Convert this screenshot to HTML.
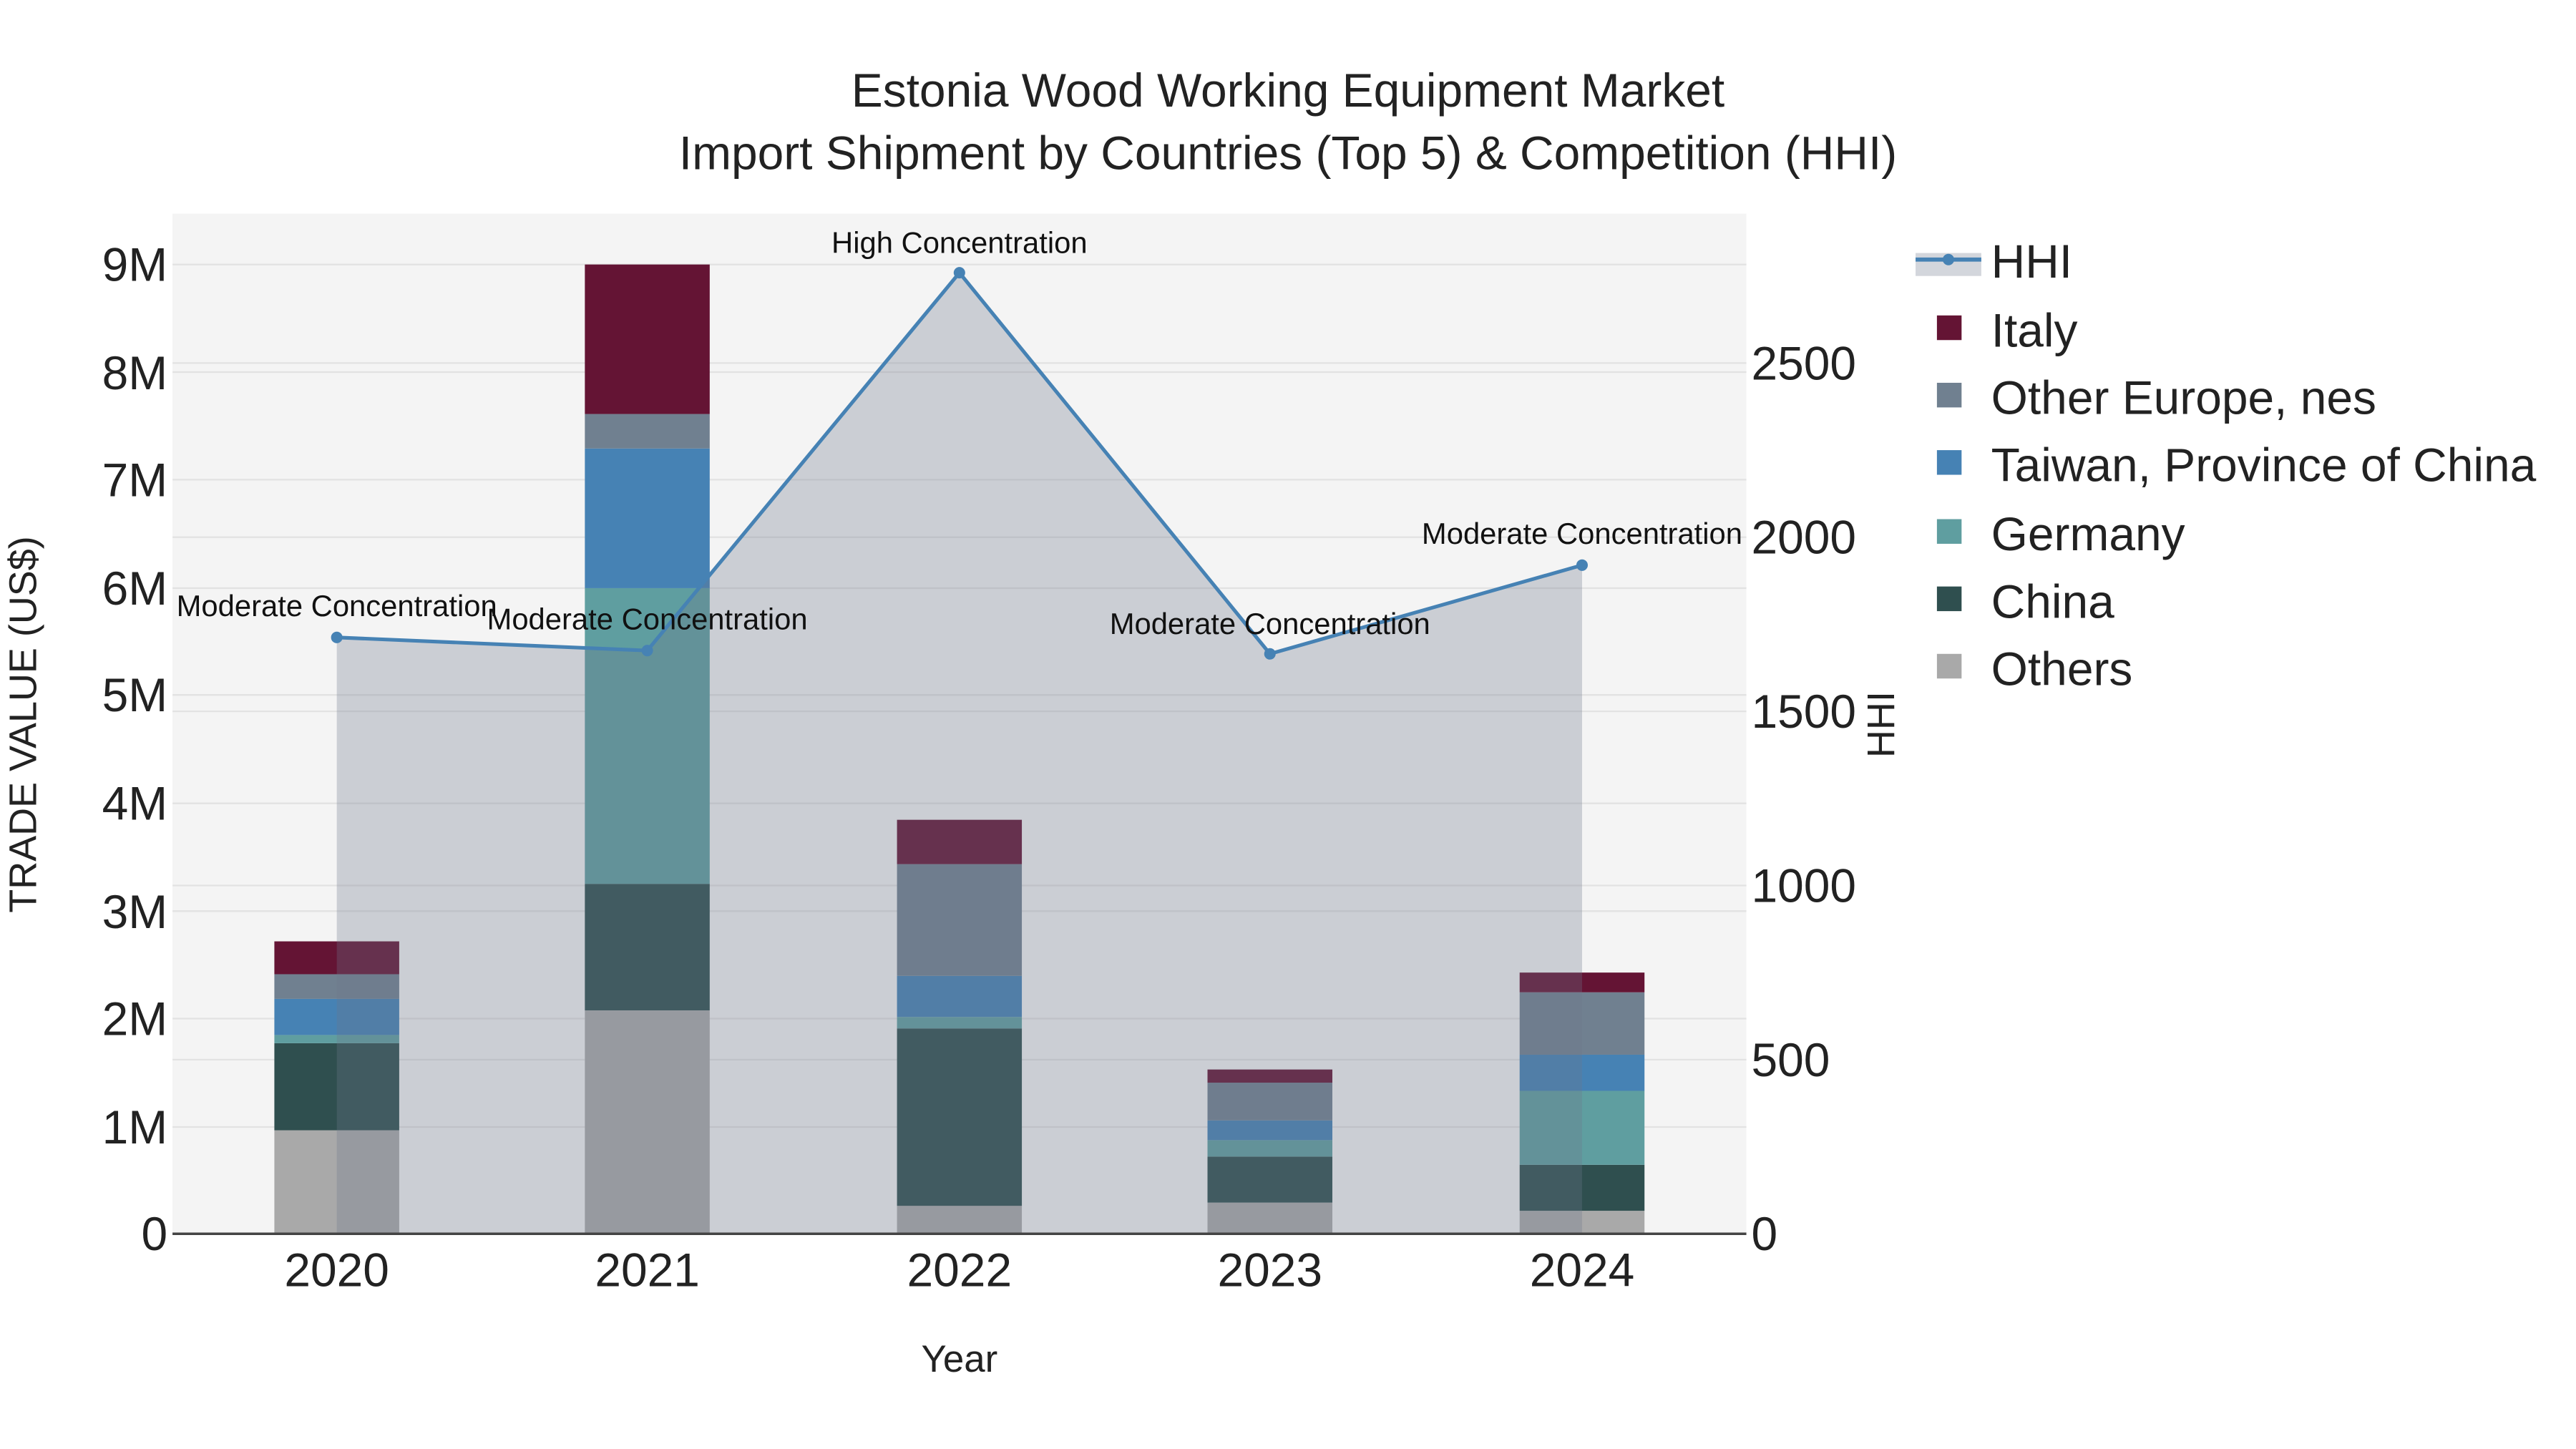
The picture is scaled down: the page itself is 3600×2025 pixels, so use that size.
<!DOCTYPE html>
<html><head><meta charset="utf-8"><style>
html,body{margin:0;padding:0;background:#fff;}
svg{display:block;}
text{font-family:"Liberation Sans",sans-serif;}
</style></head><body>
<svg width="3600" height="2025" viewBox="0 0 1568 882" preserveAspectRatio="none" xmlns="http://www.w3.org/2000/svg">
<rect x="0" y="0" width="1568" height="882" fill="#fff"/>
<rect x="105" y="130" width="958" height="621" fill="#f4f4f4"/>
<g stroke="#e2e2e2" stroke-width="1">
<line x1="105" x2="1063" y1="161" y2="161"/><line x1="105" x2="1063" y1="226.5" y2="226.5"/>
<line x1="105" x2="1063" y1="292" y2="292"/><line x1="105" x2="1063" y1="358" y2="358"/>
<line x1="105" x2="1063" y1="423" y2="423"/><line x1="105" x2="1063" y1="489" y2="489"/>
<line x1="105" x2="1063" y1="554.6" y2="554.6"/><line x1="105" x2="1063" y1="620" y2="620"/>
<line x1="105" x2="1063" y1="686" y2="686"/>
<line x1="105" x2="1063" y1="221" y2="221"/><line x1="105" x2="1063" y1="327" y2="327"/>
<line x1="105" x2="1063" y1="433" y2="433"/><line x1="105" x2="1063" y1="539" y2="539"/>
<line x1="105" x2="1063" y1="645" y2="645"/>
</g>
<g>
<rect x="167" y="688" width="76" height="63" fill="#a9a9a9"/>
<rect x="167" y="635" width="76" height="53" fill="#2f4f4f"/>
<rect x="167" y="630" width="76" height="5" fill="#5f9ea0"/>
<rect x="167" y="608" width="76" height="22" fill="#4682b4"/>
<rect x="167" y="593" width="76" height="15" fill="#708090"/>
<rect x="167" y="573" width="76" height="20" fill="#641434"/>
<rect x="356" y="615" width="76" height="136" fill="#a9a9a9"/>
<rect x="356" y="538" width="76" height="77" fill="#2f4f4f"/>
<rect x="356" y="358" width="76" height="180" fill="#5f9ea0"/>
<rect x="356" y="273" width="76" height="85" fill="#4682b4"/>
<rect x="356" y="252" width="76" height="21" fill="#708090"/>
<rect x="356" y="161" width="76" height="91" fill="#641434"/>
<rect x="546" y="734" width="76" height="17" fill="#a9a9a9"/>
<rect x="546" y="626" width="76" height="108" fill="#2f4f4f"/>
<rect x="546" y="619" width="76" height="7" fill="#5f9ea0"/>
<rect x="546" y="594" width="76" height="25" fill="#4682b4"/>
<rect x="546" y="526" width="76" height="68" fill="#708090"/>
<rect x="546" y="499" width="76" height="27" fill="#641434"/>
<rect x="735" y="732" width="76" height="19" fill="#a9a9a9"/>
<rect x="735" y="704" width="76" height="28" fill="#2f4f4f"/>
<rect x="735" y="694" width="76" height="10" fill="#5f9ea0"/>
<rect x="735" y="682" width="76" height="12" fill="#4682b4"/>
<rect x="735" y="659" width="76" height="23" fill="#708090"/>
<rect x="735" y="651" width="76" height="8" fill="#641434"/>
<rect x="925" y="737" width="76" height="14" fill="#a9a9a9"/>
<rect x="925" y="709" width="76" height="28" fill="#2f4f4f"/>
<rect x="925" y="664" width="76" height="45" fill="#5f9ea0"/>
<rect x="925" y="642" width="76" height="22" fill="#4682b4"/>
<rect x="925" y="604" width="76" height="38" fill="#708090"/>
<rect x="925" y="592" width="76" height="12" fill="#641434"/>
</g>
<path d="M205,751 L205,388 L394,396 L584,166 L773,398 L963,344 L963,751 Z" fill="rgba(110,120,140,0.3)"/>
<polyline points="205,388 394,396 584,166 773,398 963,344" fill="none" stroke="#4682b4" stroke-width="2.2"/>
<g fill="#4682b4"><circle cx="205" cy="388" r="3.5"/><circle cx="394" cy="396" r="3.5"/><circle cx="584" cy="166" r="3.5"/><circle cx="773" cy="398" r="3.5"/><circle cx="963" cy="344" r="3.5"/></g>
<line x1="105" x2="1063" y1="751" y2="751" stroke="#444" stroke-width="1.5"/>
<g font-size="18.2" fill="#111" text-anchor="middle">
<text x="205" y="375">Moderate Concentration</text>
<text x="394" y="383">Moderate Concentration</text>
<text x="584" y="154">High Concentration</text>
<text x="773" y="386">Moderate Concentration</text>
<text x="963" y="331">Moderate Concentration</text>
</g>
<g font-size="28.7" fill="#222" text-anchor="middle">
<text x="784" y="65">Estonia Wood Working Equipment Market</text>
<text x="784" y="103">Import Shipment by Countries (Top 5) &amp; Competition (HHI)</text>
</g>
<g font-size="28.7" fill="#222" text-anchor="end">
<text x="102" y="171">9M</text><text x="102" y="237">8M</text><text x="102" y="302">7M</text>
<text x="102" y="368">6M</text><text x="102" y="433">5M</text><text x="102" y="499">4M</text>
<text x="102" y="565">3M</text><text x="102" y="630">2M</text><text x="102" y="696">1M</text>
<text x="102" y="761">0</text>
</g>
<g font-size="28.7" fill="#222" text-anchor="start">
<text x="1066" y="231">2500</text><text x="1066" y="337">2000</text><text x="1066" y="443">1500</text>
<text x="1066" y="549">1000</text><text x="1066" y="655">500</text><text x="1066" y="761">0</text>
</g>
<g font-size="28.7" fill="#222" text-anchor="middle">
<text x="205" y="783">2020</text><text x="394" y="783">2021</text><text x="584" y="783">2022</text>
<text x="773" y="783">2023</text><text x="963" y="783">2024</text>
</g>
<text x="584" y="835" font-size="23" fill="#222" text-anchor="middle">Year</text>
<text transform="translate(22,441) rotate(-90)" font-size="23.5" fill="#222" text-anchor="middle">TRADE VALUE (US$)</text>
<text transform="translate(1153,441) rotate(-90)" font-size="23.5" fill="#222" text-anchor="middle">HHI</text>
<rect x="1166" y="154" width="40" height="14" fill="rgba(110,120,140,0.3)"/>
<line x1="1166" x2="1206" y1="158" y2="158" stroke="#4682b4" stroke-width="2.5"/>
<circle cx="1186" cy="158" r="3.5" fill="#4682b4"/>
<rect x="1179" y="192" width="15" height="15" fill="#641434"/>
<rect x="1179" y="233" width="15" height="15" fill="#708090"/>
<rect x="1179" y="274" width="15" height="15" fill="#4682b4"/>
<rect x="1179" y="316" width="15" height="15" fill="#5f9ea0"/>
<rect x="1179" y="357" width="15" height="15" fill="#2f4f4f"/>
<rect x="1179" y="398" width="15" height="15" fill="#a9a9a9"/>
<g font-size="28.7" fill="#222">
<text x="1212" y="169">HHI</text>
<text x="1212" y="211">Italy</text>
<text x="1212" y="252">Other Europe, nes</text>
<text x="1212" y="293">Taiwan, Province of China</text>
<text x="1212" y="335">Germany</text>
<text x="1212" y="376">China</text>
<text x="1212" y="417">Others</text>
</g>
</svg>
</body></html>
